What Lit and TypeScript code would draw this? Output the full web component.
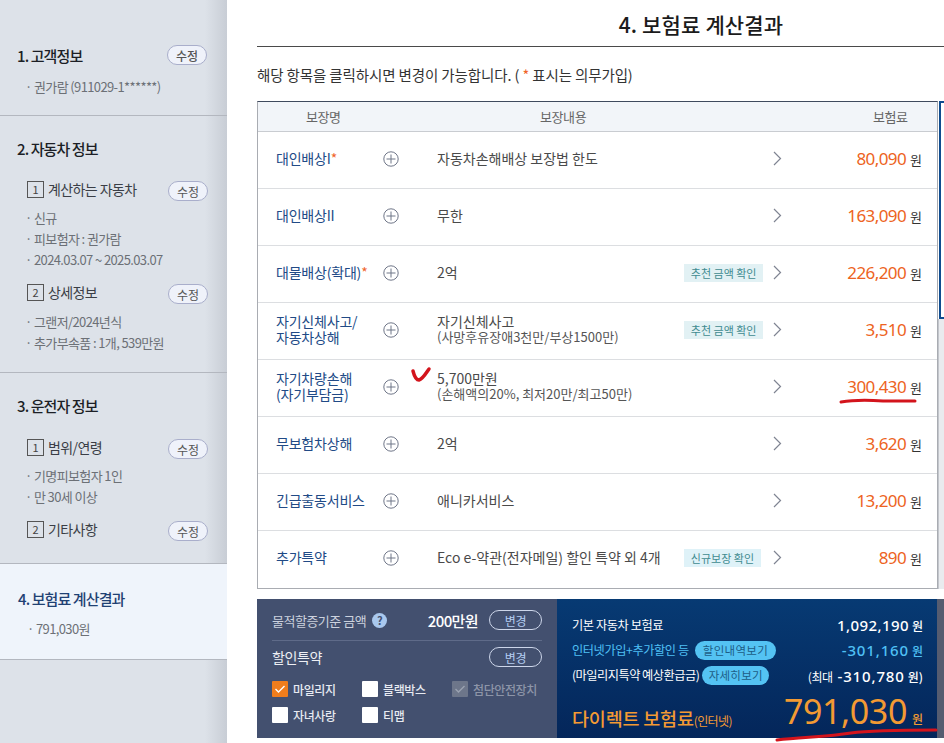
import { LitElement, html, css, svg } from "lit";
import { customElement } from "lit/decorators.js";

type Row = { name: string; star?: boolean; detail: string; sub?: string; tag?: string; tagAlt?: boolean; price: string };

const rows: Row[] = [
  { name: "대인배상I", star: true, detail: "자동차손해배상 보장법 한도", price: "80,090" },
  { name: "대인배상II", detail: "무한", price: "163,090" },
  { name: "대물배상(확대)", star: true, detail: "2억", tag: "추천 금액 확인", price: "226,200" },
  { name: "자기신체사고/\n자동차상해", detail: "자기신체사고", sub: "(사망후유장애3천만/부상1500만)", tag: "추천 금액 확인", price: "3,510" },
  { name: "자기차량손해\n(자기부담금)", detail: "5,700만원", sub: "(손해액의20%, 최저20만/최고50만)", price: "300,430" },
  { name: "무보험차상해", detail: "2억", price: "3,620" },
  { name: "긴급출동서비스", detail: "애니카서비스", price: "13,200" },
  { name: "추가특약", detail: "Eco e-약관(전자메일) 할인 특약 외 4개", tag: "신규보장 확인", tagAlt: true, price: "890" },
];

const plus = svg`<svg class="plus" width="16" height="16" viewBox="0 0 16 16"><circle cx="8" cy="8" r="7.2" fill="none" stroke="#6f7688" stroke-width="1"/><path d="M3.5 8h9M8 3.5v9" stroke="#6f7688" stroke-width="1" fill="none"/></svg>`;
const chevron = svg`<svg class="chev" width="9" height="15" viewBox="0 0 9 15"><path d="M1 1l6.5 6.5L1 14" stroke="#7f8492" stroke-width="1.2" fill="none"/></svg>`;
const tick = svg`<svg width="16" height="16" viewBox="0 0 16 16"><path d="M3.5 8l3 3 6-6" fill="none" stroke="currentColor" stroke-width="1.4"/></svg>`;

@customElement("app-root")
export class AppRoot extends LitElement {
  static styles = css`
    :host { display: block; width: 944px; height: 743px; overflow: hidden; position: relative; background: #fff;
      font-family: "Noto Sans CJK KR", "Noto Sans", sans-serif; letter-spacing: -0.4px; }
    * { box-sizing: border-box; }
    .page { display: flex; height: 743px; }
    .side { width: 227px; flex: none; background: linear-gradient(90deg, #dde2e9 0, #dde2e9 205px, #c8cdd5 227px); color: #666; display: flex; flex-direction: column; }
    .sec { border-bottom: 1px solid #b3b7bf; padding: 0 17px; }
    .s1 { height: 116px; padding-top: 43px; }
    .s2 { height: 257px; padding-top: 20px; }
    .s3 { height: 191px; padding-top: 20px; }
    .s4 { height: 96px; padding-top: 22px; background: #eff4fb; }
    .title { display: flex; justify-content: space-between; align-items: center; font-size: 15px; font-weight: 500; color: #1c1f26; height: 24px; letter-spacing: -0.9px; }
    .s4 .title { color: #1f4173; padding-left: 1px; }
    .edit { width: 40px; height: 20px; border: 1px solid #a9aecb; border-radius: 10px; background: #eff2fa; color: #555; font-size: 12px; display: flex; align-items: center; justify-content: center; flex: none; letter-spacing: 0; margin-right: 2px; }
    .s1 .edit { margin-right: 3px; }
    .sub .edit { margin-top: 4px; }
    .info { margin: 9px 0 0 8px; font-size: 13px; line-height: 21px; color: #6c7076; letter-spacing: -0.62px; }
    .s4 .info { margin: 8px 0 0 10px; }
    .sub { display: flex; justify-content: space-between; align-items: center; margin: 0 0 0 10px; font-size: 14px; color: #3a3e46; height: 24px; letter-spacing: -0.6px; }
    .sub > span.l { display: flex; align-items: center; gap: 4px; }
    .num { width: 17px; height: 17px; border: 1px solid #555; font-size: 11px; display: inline-flex; align-items: center; justify-content: center; color: #444; letter-spacing: 0; }
    .s2 .sub.a { margin-top: 17px; }
    .s3 .sub.a { margin-top: 18px; }
    .sub.b { margin-top: 10px; }
    .info.tight { margin-top: 6px; }
    .sub.b + .info.tight { margin-top: 7px; }

    .main { flex: 1; position: relative; padding: 0 0 0 30px; min-width: 0; }
    h1 { margin: 0; height: 47px; border-bottom: 1px solid #4a4a4a; font-size: 21px; font-weight: 500; color: #1b1b1b; text-align: center; line-height: 48px; padding-left: 201px; white-space: nowrap; letter-spacing: 0.15px; width: 687px; }
    .note { font-size: 14.5px; color: #333; margin: 18px 0 0; line-height: 20px; height: 36px; letter-spacing: -0.12px; font-weight: 400; }
    .note b { color: #f0642a; font-weight: 400; }
    .table { width: 681px; border: 1px solid #a9acb2; border-top: 1px solid #3f4a5e; }
    .row { display: grid; grid-template-columns: 118px 42px 246px 109px 16px 1fr; align-items: center; height: 57px; border-top: 1px solid #dcdee1; font-size: 14px; color: #444; padding-bottom: 2px; }
    .row.head { height: 30px; border-top: 0; border-bottom: 1px solid #c9ccd1; background: #f2f5f9; color: #666; font-size: 13px; display: block; position: relative; padding: 0; }
    .row.head + .row { border-top: 0; height: 56px; }
    .row:last-child { height: 58px; padding-bottom: 3px; }
    .hc { position: absolute; top: 7px; line-height: 16px; }
    .name { padding-left: 18px; color: #214a86; white-space: pre-line; line-height: 16px; letter-spacing: -0.2px; margin-bottom: 2px; }
    .name b { color: #f0642a; font-weight: 400; }
    .plus { display: block; margin-left: 7px; }
    .detail { padding-left: 19px; line-height: 16px; white-space: nowrap; letter-spacing: 0; color: #4a4a4a; margin-bottom: 2px; }
    .detail small { display: block; font-size: 13px; letter-spacing: 0; color: #555; }
    .tag-cell { display: flex; justify-content: flex-end; padding-right: 10px; }
    .tag { background: #e2f1f4; color: #3f8b90; font-size: 11px; height: 18px; line-height: 18px; padding: 0 6.5px; letter-spacing: 0; white-space: nowrap; }
    .tag.alt { background: #dff2f8; margin-right: 2px; padding: 0 7px; }
    .chev { display: block; margin-bottom: 2px; }
    .price { text-align: right; padding-right: 15px; font-size: 17px; color: #ed6322; white-space: nowrap; letter-spacing: -0.6px; font-family: "Noto Sans", sans-serif; margin-bottom: 2px; }
    .price i { font-style: normal; font-size: 13px; color: #333; margin-left: 4px; font-family: "Noto Sans CJK KR", sans-serif; letter-spacing: 0; }

    .bottom { display: flex; width: 681px; height: 139px; margin-top: 10px; color: #fff; }
    .left { width: 300px; background: #43506f; padding: 10px 15px 0 15px; font-size: 12px; }
    .b-row { display: flex; align-items: center; height: 22px; }
    .b-row .val { margin-left: auto; font-size: 15px; font-weight: 500; margin-right: 11px; letter-spacing: -0.6px; }
    .lbl { color: #ccd2de; font-size: 13px; letter-spacing: -0.5px; }
    .q { display: inline-flex; width: 15px; height: 15px; border-radius: 50%; background: #a9c8ee; color: #43506f; font-size: 11px; font-weight: 700; align-items: center; justify-content: center; margin-left: 6px; }
    .chg { width: 53px; height: 20px; border: 1px solid #cdd6ea; border-radius: 10px; color: #b4cdf2; font-size: 12px; display: flex; align-items: center; justify-content: center; flex: none; }
    .rule { height: 1px; background: #5f6b89; margin: 9px 0 5px; }
    .disc { font-size: 14px; color: #eef0f5; }
    .disc + .chg { margin-left: auto; }
    .checks { display: grid; grid-template-columns: 90px 90px 1fr; row-gap: 10px; margin-top: 13px; }
    .ck { display: flex; align-items: center; gap: 5px; font-size: 12px; font-weight: 500; color: #e7eaf1; white-space: nowrap; height: 16px; }
    .box { width: 16px; height: 16px; background: #fff; border-radius: 1px; flex: none; display: flex; }
    .box.on { background: #f07d1c; color: #fff; }
    .box.off { background: #6d768a; color: #9aa2b1; }
    .ck.dis { color: #8d95a8; }
    .right { flex: 1; background: linear-gradient(180deg, #073a73 0, #04265a 100%); padding: 13px 15px 0 15px; position: relative; }
    .r-row { display: flex; justify-content: space-between; align-items: center; height: 25.5px; font-size: 12.2px; white-space: nowrap; }
    .r-row.mile > span:first-child { letter-spacing: -0.5px; }
    .r-row .amt { font-size: 15px; font-weight: 500; font-family: "Noto Sans", sans-serif; letter-spacing: 0.4px; }
    .r-row.blue .amt, .r-row.mile .amt { letter-spacing: 0.85px; }
    .amt small { font-size: 12px; font-weight: 400; font-family: "Noto Sans CJK KR", sans-serif; letter-spacing: -0.4px; }
    .amt i { font-style: normal; font-size: 12px; font-family: "Noto Sans CJK KR", sans-serif; margin-left: 3px; letter-spacing: 0; }
    .blue { color: #4fc0f5; }
    .pill { display: inline-block; background: #54c3f3; color: #1d5d87; border-radius: 10px; font-size: 11.5px; height: 19px; line-height: 19px; padding: 0 8px; margin-left: 6px; letter-spacing: 0.3px; }
    .mile .pill { margin-left: 3px; padding: 0 6.5px; letter-spacing: 0.2px; }
    .total { display: flex; justify-content: space-between; align-items: flex-end; color: #f39a33; margin-top: 1px; height: 40px; }
    .total .t { font-size: 18.5px; font-weight: 500; white-space: nowrap; letter-spacing: -0.2px; line-height: 26px; margin-bottom: -4px; }
    .total .t small { font-size: 12px; font-weight: 400; letter-spacing: -0.6px; }
    .total .big { display: flex; align-items: baseline; font-size: 34px; line-height: 40px; font-family: "Noto Sans", sans-serif; letter-spacing: -0.4px; white-space: nowrap; margin-bottom: -1px; }
    .big i { font-style: normal; font-size: 12px; line-height: 12px; font-weight: 500; font-family: "Noto Sans CJK KR", sans-serif; margin-left: 5px; letter-spacing: 0; }

    .rail { position: absolute; right: 0; top: 101px; width: 5px; height: 218px; background: #fff; border: 2px solid #0f4c8f; border-right: 0; }
    .rail2 { position: absolute; right: 0; top: 319px; width: 6px; height: 270px; background: #e9ebee; border-left: 1px solid #c3c6cc; }
    .rail3 { position: absolute; right: 0; top: 599px; width: 7px; height: 139px; background: #555c70; }
    .ink { position: absolute; left: 0; top: 0; width: 944px; height: 743px; pointer-events: none; }
  `;

  private row(r: Row) {
    return html`<div class="row">
      <div class="name">${r.name}${r.star ? html`<b>*</b>` : ""}</div>
      <div>${plus}</div>
      <div class="detail">${r.detail}${r.sub ? html`<small>${r.sub}</small>` : ""}</div>
      <div class="tag-cell">${r.tag ? html`<span class="tag ${r.tagAlt ? "alt" : ""}">${r.tag}</span>` : ""}</div>
      <div>${chevron}</div>
      <div class="price">${r.price}<i>원</i></div>
    </div>`;
  }

  render() {
    return html`<div class="page">
      <aside class="side">
        <section class="sec s1">
          <div class="title"><span>1. 고객정보</span><span class="edit">수정</span></div>
          <div class="info">· 권가람 (911029-1******)</div>
        </section>
        <section class="sec s2">
          <div class="title"><span>2. 자동차 정보</span></div>
          <div class="sub a"><span class="l"><span class="num">1</span>계산하는 자동차</span><span class="edit">수정</span></div>
          <div class="info tight">· 신규<br />· 피보험자 : 권가람<br />· 2024.03.07 ~ 2025.03.07</div>
          <div class="sub b"><span class="l"><span class="num">2</span>상세정보</span><span class="edit">수정</span></div>
          <div class="info tight">· 그랜저/2024년식<br />· 추가부속품 : 1개, 539만원</div>
        </section>
        <section class="sec s3">
          <div class="title"><span>3. 운전자 정보</span></div>
          <div class="sub a"><span class="l"><span class="num">1</span>범위/연령</span><span class="edit">수정</span></div>
          <div class="info tight">· 기명피보험자 1인<br />· 만 30세 이상</div>
          <div class="sub b"><span class="l"><span class="num">2</span>기타사항</span><span class="edit">수정</span></div>
        </section>
        <section class="sec s4">
          <div class="title"><span>4. 보험료 계산결과</span></div>
          <div class="info">· 791,030원</div>
        </section>
      </aside>
      <main class="main">
        <h1>4. 보험료 계산결과</h1>
        <p class="note">해당 항목을 클릭하시면 변경이 가능합니다. ( <b>*</b> 표시는 의무가입)</p>
        <div class="table">
          <div class="row head">
            <span class="hc" style="left:48px">보장명</span>
            <span class="hc" style="left:282px">보장내용</span>
            <span class="hc" style="left:615px">보험료</span>
          </div>
          ${rows.map((r) => this.row(r))}
        </div>
        <div class="bottom">
          <div class="left">
            <div class="b-row"><span class="lbl">물적할증기준 금액</span><span class="q">?</span><span class="val">200만원</span><span class="chg">변경</span></div>
            <div class="rule"></div>
            <div class="b-row"><span class="disc">할인특약</span><span class="chg">변경</span></div>
            <div class="checks">
              <span class="ck"><span class="box on">${tick}</span>마일리지</span>
              <span class="ck"><span class="box"></span>블랙박스</span>
              <span class="ck dis"><span class="box off">${tick}</span>첨단안전장치</span>
              <span class="ck"><span class="box"></span>자녀사랑</span>
              <span class="ck"><span class="box"></span>티맵</span>
            </div>
          </div>
          <div class="right">
            <div class="r-row"><span>기본 자동차 보험료</span><span class="amt">1,092,190<i>원</i></span></div>
            <div class="r-row blue"><span>인터넷가입+추가할인 등<span class="pill">할인내역보기</span></span><span class="amt">-301,160<i>원</i></span></div>
            <div class="r-row mile"><span>(마일리지특약 예상환급금)<span class="pill">자세히보기</span></span><span class="amt"><small>(최대</small> -310,780<i>원)</i></span></div>
            <div class="total"><span class="t">다이렉트 보험료<small>(인터넷)</small></span><span class="big">791,030<i>원</i></span></div>
          </div>
        </div>
        <div class="rail"></div>
        <div class="rail2"></div>
        <div class="rail3"></div>
      </main>
    </div>
    <svg class="ink" viewBox="0 0 944 743">
      <path d="M413 371c1 4 3 9 6 9 4-1 7-7 10-11" fill="none" stroke="#d3141c" stroke-width="3.5" stroke-linecap="round"/>
      <path d="M841 402c12-2 28-2 42-1 10 0 20 0 32 0" fill="none" stroke="#d3141c" stroke-width="3" stroke-linecap="round"/>
      <path d="M777 740c24-3 50-3 74-7 22-3 50-3 85-3" fill="none" stroke="#d3141c" stroke-width="3" stroke-linecap="round"/>
    </svg>`;
  }
}
